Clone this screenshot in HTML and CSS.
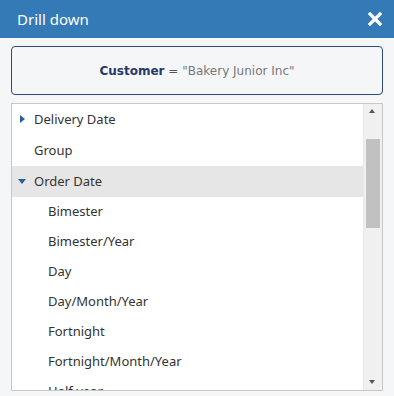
FILE: index.html
```html
<!DOCTYPE html>
<html>
<head>
<meta charset="utf-8">
<link rel="stylesheet" href="styles.css">
</head>
<body>
<div class="dialog">
  <div class="header">
    <span class="title">Drill down</span>
    <svg class="close" width="14" height="14" viewBox="0 0 14 14"><path d="M2 2 L12 12 M12 2 L2 12" stroke="#fff" stroke-width="3.2" stroke-linecap="square"/></svg>
  </div>
  <div class="body">
    <div class="condition"><span class="field">Customer</span> = <span class="value">"Bakery Junior Inc"</span></div>
    <div class="list">
      <div class="items">
        <div class="row top"><span class="arrow right"></span>Delivery Date</div>
        <div class="row top"><span class="arrow none"></span>Group</div>
        <div class="row top selected"><span class="arrow down"></span>Order Date</div>
        <div class="row child">Bimester</div>
        <div class="row child">Bimester/Year</div>
        <div class="row child">Day</div>
        <div class="row child">Day/Month/Year</div>
        <div class="row child">Fortnight</div>
        <div class="row child">Fortnight/Month/Year</div>
        <div class="row child">Half year</div>
      </div>
      <div class="scrollbar">
        <div class="sb-up"></div>
        <div class="sb-track"><div class="sb-thumb"></div></div>
        <div class="sb-down"></div>
      </div>
    </div>
  </div>
</div>
</body>
</html>
```
FILE: styles.css
```css
* { box-sizing: border-box; }
html, body { margin: 0; padding: 0; }
body {
  width: 394px;
  height: 396px;
  overflow: hidden;
  font-family: "Noto Sans", "Open Sans", sans-serif;
  background: #f5f6f8;
}
.dialog { width: 394px; height: 396px; display: flex; flex-direction: column; }
.header {
  height: 38px;
  background: #337ab7;
  display: flex;
  align-items: center;
  justify-content: space-between;
  padding: 0 12px 0 17px;
  flex-shrink: 0;
}
.title { color: #fff; font-size: 15px; }
.close { display: block; }
.body {
  flex: 1;
  padding: 8px 11px 5px 11px;
  display: flex;
  flex-direction: column;
  gap: 8px;
  min-height: 0;
}
.condition {
  height: 49px;
  border: 1px solid #2c4a7c;
  border-radius: 4px;
  display: flex;
  align-items: center;
  justify-content: center;
  font-family: "DejaVu Sans", sans-serif;
  font-size: 12px;
  color: #555;
  white-space: pre;
  flex-shrink: 0;
  padding-top: 1px;
}
.field { font-weight: bold; color: #253a6b; }
.value { color: #777; }
.list {
  flex: 1;
  min-height: 0;
  border: 1px solid #c8c8c8;
  background: #fff;
  display: flex;
  overflow: hidden;
}
.items { flex: 1; overflow: hidden; }
.row {
  height: 30px;
  display: flex;
  align-items: center;
  font-size: 13px;
  color: #333;
  flex-shrink: 0;
  padding-bottom: 2px;
}
.row.top { padding-left: 6px; height: 31px; }
.row.selected { background: #e6e6e6; }
.row.child { padding-left: 36px; }
.arrow { width: 9px; height: 9px; margin-right: 7px; position: relative; flex-shrink: 0; top: 1px; }
.arrow.right::before {
  content: ""; position: absolute; left: 2px; top: 0;
  border-left: 5px solid #2c5f9e;
  border-top: 4.5px solid transparent;
  border-bottom: 4.5px solid transparent;
}
.arrow.down::before {
  content: ""; position: absolute; left: 0; top: 2px;
  border-top: 5px solid #2c5f9e;
  border-left: 4.5px solid transparent;
  border-right: 4.5px solid transparent;
}
.scrollbar {
  width: 19px;
  flex-shrink: 0;
  background: #f0f0f0;
  border-left: 1px solid #e8e8e8;
  display: flex;
  flex-direction: column;
  align-items: center;
}
.sb-up, .sb-down { height: 17px; width: 100%; position: relative; flex-shrink: 0; }
.sb-up::before {
  content: ""; position: absolute; left: 5px; top: 5px;
  border-bottom: 4px solid #555;
  border-left: 3.5px solid transparent;
  border-right: 3.5px solid transparent;
}
.sb-down::before {
  content: ""; position: absolute; left: 5px; top: 7px;
  border-top: 4px solid #555;
  border-left: 3.5px solid transparent;
  border-right: 3.5px solid transparent;
}
.sb-track { flex: 1; width: 100%; padding: 18px 2px 0 2px; }
.sb-thumb { height: 89px; background: #c1c1c1; }
```
